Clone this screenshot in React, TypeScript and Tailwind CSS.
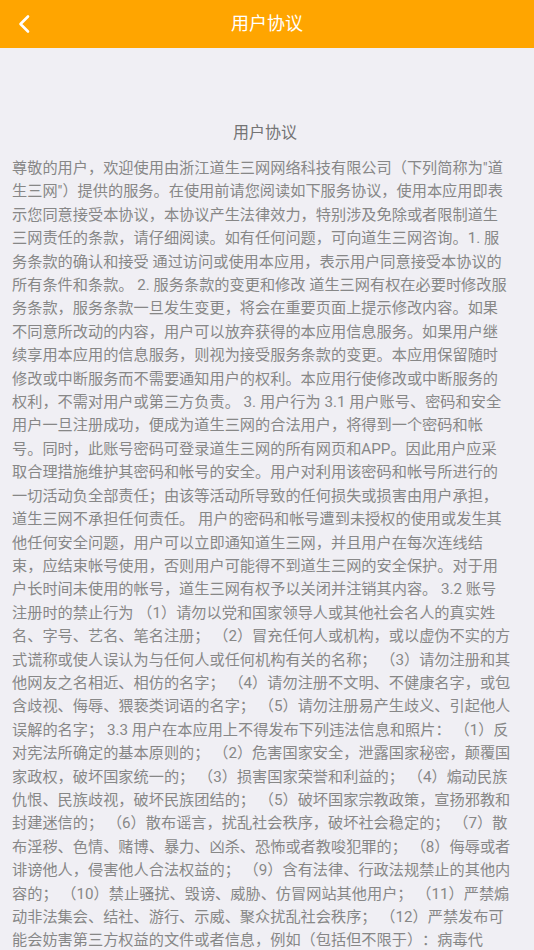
import React from 'react';

const LINES = [
  '尊敬的用户，欢迎使用由浙江道生三网网络科技有限公司（下列简称为"道',
  '生三网"）提供的服务。在使用前请您阅读如下服务协议，使用本应用即表',
  '示您同意接受本协议，本协议产生法律效力，特别涉及免除或者限制道生',
  '三网责任的条款，请仔细阅读。如有任何问题，可向道生三网咨询。1. 服',
  '务条款的确认和接受 通过访问或使用本应用，表示用户同意接受本协议的',
  '所有条件和条款。 2. 服务条款的变更和修改 道生三网有权在必要时修改服',
  '务条款，服务条款一旦发生变更，将会在重要页面上提示修改内容。如果',
  '不同意所改动的内容，用户可以放弃获得的本应用信息服务。如果用户继',
  '续享用本应用的信息服务，则视为接受服务条款的变更。本应用保留随时',
  '修改或中断服务而不需要通知用户的权利。本应用行使修改或中断服务的',
  '权利，不需对用户或第三方负责。 3. 用户行为 3.1 用户账号、密码和安全',
  '用户一旦注册成功，便成为道生三网的合法用户，将得到一个密码和帐',
  '号。同时，此账号密码可登录道生三网的所有网页和APP。因此用户应采',
  '取合理措施维护其密码和帐号的安全。用户对利用该密码和帐号所进行的',
  '一切活动负全部责任；由该等活动所导致的任何损失或损害由用户承担，',
  '道生三网不承担任何责任。 用户的密码和帐号遭到未授权的使用或发生其',
  '他任何安全问题，用户可以立即通知道生三网，并且用户在每次连线结',
  '束，应结束帐号使用，否则用户可能得不到道生三网的安全保护。对于用',
  '户长时间未使用的帐号，道生三网有权予以关闭并注销其内容。 3.2 账号',
  '注册时的禁止行为 （1）请勿以党和国家领导人或其他社会名人的真实姓',
  '名、字号、艺名、笔名注册； （2）冒充任何人或机构，或以虚伪不实的方',
  '式谎称或使人误认为与任何人或任何机构有关的名称； （3）请勿注册和其',
  '他网友之名相近、相仿的名字； （4）请勿注册不文明、不健康名字，或包',
  '含歧视、侮辱、猥亵类词语的名字； （5）请勿注册易产生歧义、引起他人',
  '误解的名字； 3.3 用户在本应用上不得发布下列违法信息和照片： （1）反',
  '对宪法所确定的基本原则的； （2）危害国家安全，泄露国家秘密，颠覆国',
  '家政权，破坏国家统一的； （3）损害国家荣誉和利益的； （4）煽动民族',
  '仇恨、民族歧视，破坏民族团结的； （5）破坏国家宗教政策，宣扬邪教和',
  '封建迷信的； （6）散布谣言，扰乱社会秩序，破坏社会稳定的； （7）散',
  '布淫秽、色情、赌博、暴力、凶杀、恐怖或者教唆犯罪的； （8）侮辱或者',
  '诽谤他人，侵害他人合法权益的； （9）含有法律、行政法规禁止的其他内',
  '容的； （10）禁止骚扰、毁谤、威胁、仿冒网站其他用户； （11）严禁煽',
  '动非法集会、结社、游行、示威、聚众扰乱社会秩序； （12）严禁发布可',
  '能会妨害第三方权益的文件或者信息，例如（包括但不限于）：病毒代',
];

export default function App() {
  return (
    <div className="h-[950px] overflow-hidden bg-[#f0eff4] font-['Roboto','Noto_Sans_CJK_SC',sans-serif] [text-spacing-trim:space-all]">
      {/* top bar */}
      <div className="relative flex h-12 items-center justify-center bg-[#ffa500]">
        <button className="absolute left-[8px] top-1/2 flex h-8 w-8 -translate-y-1/2 items-center justify-center">
          <svg width="14" height="20" viewBox="0 0 14 20" fill="none">
            <path d="M11 2.5 L3.5 10 L11 17.5" stroke="#ffffff" strokeWidth="2.6" strokeLinecap="round" strokeLinejoin="round" />
          </svg>
        </button>
        <h1 className="text-[18px] leading-none text-white">用户协议</h1>
      </div>

      {/* agreement */}
      <div className="pt-[73px] pl-3 pr-4">
        <h2 className="text-center text-[16px] leading-6 text-[#747474]">用户协议</h2>
        <div className="mt-[12px] text-[15.2px] leading-[23.4px] text-[#878787]">
          {LINES.map((line, i) => (
            <div key={i} className="whitespace-nowrap">{line}</div>
          ))}
        </div>
      </div>
    </div>
  );
}
